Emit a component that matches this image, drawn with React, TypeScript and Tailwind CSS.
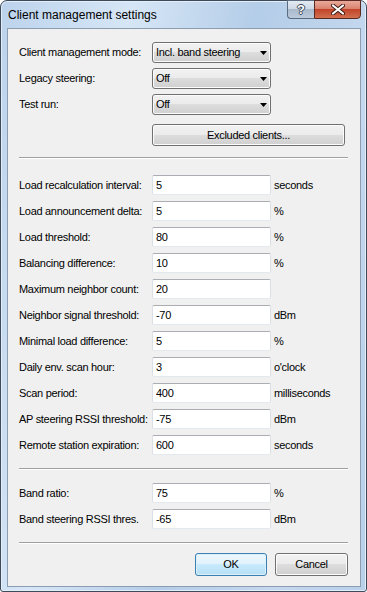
// Diálogo estilo Windows 7 con la configuración de client management.

const font = "font-['Liberation_Sans',Arial,sans-serif]";

type FieldRow = { label: string; value: string; unit?: string };

const loadRows: FieldRow[] = [
  { label: "Load recalculation interval:", value: "5", unit: "seconds" },
  { label: "Load announcement delta:", value: "5", unit: "%" },
  { label: "Load threshold:", value: "80", unit: "%" },
  { label: "Balancing difference:", value: "10", unit: "%" },
  { label: "Maximum neighbor count:", value: "20" },
  { label: "Neighbor signal threshold:", value: "-70", unit: "dBm" },
  { label: "Minimal load difference:", value: "5", unit: "%" },
  { label: "Daily env. scan hour:", value: "3", unit: "o'clock" },
  { label: "Scan period:", value: "400", unit: "milliseconds" },
  { label: "AP steering RSSI threshold:", value: "-75", unit: "dBm" },
  { label: "Remote station expiration:", value: "600", unit: "seconds" },
];

const bandRows: FieldRow[] = [
  { label: "Band ratio:", value: "75", unit: "%" },
  { label: "Band steering RSSI thres.", value: "-65", unit: "dBm" },
];

const btnBg =
  "bg-[linear-gradient(to_bottom,#f2f2f2_0%,#ebebeb_49%,#dddddd_50%,#cfcfcf_100%)] border border-[#707070] rounded-[3px] shadow-[inset_0_0_0_1px_#fcfcfc]";

const txt = "text-[11px] leading-none tracking-[-0.3px]";

function Combo({ label, value }: { label: string; value: string }) {
  return (
    <div className="flex items-center h-[21px]">
      <span className={`w-[133px] ${txt}`}>{label}</span>
      <div className={`w-[119px] h-[21px] flex items-center justify-between pl-[3px] pr-[3px] ${btnBg}`}>
        <span className={txt}>{value}</span>
        <svg width="7" height="4" viewBox="0 0 7 4">
          <path d="M0 0 H7 L3.5 4 Z" fill="#000" />
        </svg>
      </div>
    </div>
  );
}

function Field({ label, value, unit }: FieldRow) {
  return (
    <div className="flex items-center h-[20px]">
      <span className={`w-[133px] whitespace-nowrap ${txt}`}>{label}</span>
      <div className="w-[119px] h-[20px] bg-white border border-[#dbdfe6] border-t-[#abadb3] border-b-[#e3e9ef] rounded-[2px] flex items-center pl-[3px]">
        <span className={txt}>{value}</span>
      </div>
      {unit && <span className={`ml-[3px] ${txt}`}>{unit}</span>}
    </div>
  );
}

function Separator() {
  return <div className="w-[329px] h-px bg-[#a0a0a0] shadow-[0_1px_0_#ffffff]" />;
}

export default function App() {
  return (
    <div className={`w-[367px] h-[592px] bg-white ${font} text-black`}>
      <div className="h-full flex flex-col rounded-t-[7px] rounded-b-[3px] border border-[#3d4a5a] bg-[linear-gradient(100deg,#bcd3ec_0%,#d6e6f6_28%,#b4cde8_55%,#c4d8ee_80%,#b9d0ea_100%)] shadow-[inset_0_0_0_1px_#e4eef9]">
        {/* barra de título */}
        <div className="h-[27px] flex items-start shrink-0">
          <span className="ml-[7px] mt-[8px] text-[12px] leading-none">Client management settings</span>
          <div className="ml-auto mr-[5px] flex -mt-px">
            <div className="w-[27px] h-[19px] border border-[#5b6b80] border-r-0 rounded-bl-[4px] bg-[linear-gradient(to_bottom,#e3eaf2_0%,#cfdae6_45%,#a9bacd_50%,#bccbdb_100%)] flex items-center justify-center">
              <span className="text-[13px] font-bold leading-none text-white [text-shadow:1px_0_0_#3a4656,-1px_0_0_#3a4656,0_1px_0_#3a4656,0_-1px_0_#3a4656]">?</span>
            </div>
            <div className="w-[47px] h-[19px] border border-[#5a2a22] rounded-br-[4px] bg-[linear-gradient(to_bottom,#e9a99a_0%,#d9836f_45%,#c2442b_50%,#d2704f_100%)] flex items-center justify-center">
              <svg width="14" height="11" viewBox="0 0 14 11">
                <path d="M2 1.5 L12 9.5 M12 1.5 L2 9.5" stroke="#3b1a14" strokeWidth="4" strokeLinecap="round" />
                <path d="M2 1.5 L12 9.5 M12 1.5 L2 9.5" stroke="#ffffff" strokeWidth="2.2" strokeLinecap="round" />
              </svg>
            </div>
          </div>
        </div>

        {/* área cliente */}
        <div className="flex-1 ml-[6px] mr-[5px] mb-[4px] border border-[#8d9db1] bg-[#f0f0f0] pl-[11px] pt-[13px] flex flex-col">
          <div className="flex flex-col gap-[5px]">
            <Combo label="Client management mode:" value="Incl. band steering" />
            <Combo label="Legacy steering:" value="Off" />
            <Combo label="Test run:" value="Off" />
          </div>
          <div className={`mt-[9px] ml-[133px] w-[193px] h-[22px] flex items-center justify-center ${txt} ${btnBg}`}>
            Excluded clients...
          </div>

          <div className="mt-[11px]">
            <Separator />
          </div>

          <div className="mt-[17px] flex flex-col gap-[6px]">
            {loadRows.map((r) => (
              <Field key={r.label} {...r} />
            ))}
          </div>

          <div className="mt-[13px]">
            <Separator />
          </div>

          <div className="mt-[14px] flex flex-col gap-[6px]">
            {bandRows.map((r) => (
              <Field key={r.label} {...r} />
            ))}
          </div>

          <div className="mt-[13px]">
            <Separator />
          </div>

          <div className="mt-[10px] w-[329px] flex justify-end gap-[8px]">
            <div className={`w-[72px] h-[23px] flex items-center justify-center ${txt} border border-[#3c7fb1] rounded-[3px] bg-[linear-gradient(to_bottom,#edf7fd_0%,#e0f2fc_49%,#c9eafc_50%,#b5def5_100%)] shadow-[inset_0_0_0_1px_#dcf0fc]`}>
              OK
            </div>
            <div className={`w-[73px] h-[23px] flex items-center justify-center ${txt} ${btnBg}`}>
              Cancel
            </div>
          </div>
        </div>
      </div>
    </div>
  );
}
